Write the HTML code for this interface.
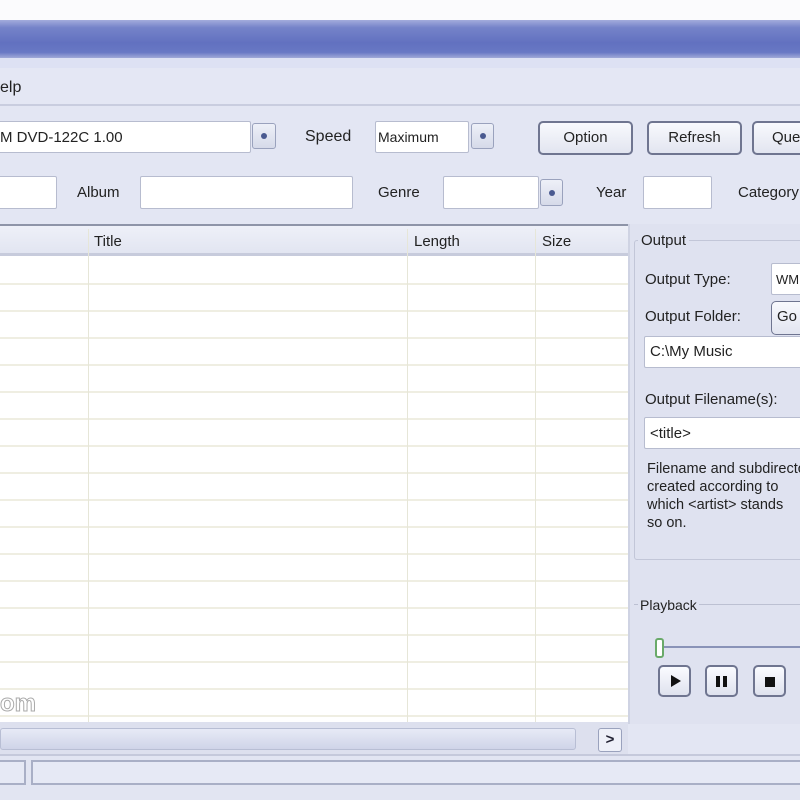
<!DOCTYPE html>
<html><head><style>
body{margin:0;width:800px;height:800px;overflow:hidden;background:#e3e6f3;font-family:"Liberation Sans","DejaVu Sans",sans-serif;font-size:15px;color:#222;position:relative}
div,span{position:absolute;box-sizing:border-box}
.in{background:#fff;border:1px solid #b7bccf;border-radius:2px}
.dd{background:linear-gradient(#eef0f8,#d6dae9);border:1px solid #9aa2bd;border-radius:3px}
.dd::after{content:"";position:absolute;left:50%;top:50%;width:6px;height:6px;margin:-3px;background:#4a5a90;border-radius:50%}
.btn{background:linear-gradient(#f8f9fd,#e2e5f0);border:2px solid #6f7590;border-radius:5px;text-align:center;line-height:30px;font-size:15px}
.pb{background:linear-gradient(#fafbff,#dfe2ee);border:2px solid #6f7590;border-radius:5px}
</style></head><body>
<div style="left:0;top:0;width:800px;height:20px;background:#fbfbfd"></div>
<div style="left:0;top:20px;width:800px;height:38px;background:linear-gradient(#a3acdc 0%,#7583c9 20%,#6271c0 60%,#6878c4 85%,#a0a9d8 100%)"></div>
<div style="left:0;top:58px;width:800px;height:10px;background:#dde1f3"></div>
<div style="left:0;top:68px;width:800px;height:38px;background:#e4e7f4;border-bottom:2px solid #c9cddf"></div>
<span style="left:0;top:79px;font-size:16px">elp</span>

<div class="in" style="left:-5px;top:121px;width:256px;height:32px"></div>
<span style="left:0;top:129px">M DVD-122C 1.00</span>
<div class="dd" style="left:252px;top:123px;width:24px;height:26px"></div>
<span style="left:305px;top:128px;font-size:16px">Speed</span>
<div class="in" style="left:375px;top:121px;width:94px;height:32px"></div>
<span style="left:378px;top:129px;font-size:14px">Maximum</span>
<div class="dd" style="left:471px;top:123px;width:23px;height:26px"></div>
<div class="btn" style="left:538px;top:121px;width:95px;height:34px">Option</div>
<div class="btn" style="left:647px;top:121px;width:95px;height:34px">Refresh</div>
<div class="btn" style="left:752px;top:121px;width:70px;height:34px;text-align:left;padding-left:18px">Query</div>

<div class="in" style="left:-5px;top:176px;width:62px;height:33px"></div>
<span style="left:77px;top:184px">Album</span>
<div class="in" style="left:140px;top:176px;width:213px;height:33px"></div>
<span style="left:378px;top:184px">Genre</span>
<div class="in" style="left:443px;top:176px;width:96px;height:33px"></div>
<div class="dd" style="left:540px;top:179px;width:23px;height:27px"></div>
<span style="left:596px;top:184px">Year</span>
<div class="in" style="left:643px;top:176px;width:69px;height:33px"></div>
<span style="left:738px;top:184px">Category</span>

<div style="left:0;top:224px;width:628px;height:500px;background:#fff;border-top:2px solid #8e94a8"></div>
<div style="left:0;top:226px;width:628px;height:30px;background:linear-gradient(#eef0f8,#e2e5f1);border-bottom:3px solid #c7cbdc"></div>
<span style="left:94px;top:233px;font-size:15px">Title</span>
<span style="left:414px;top:233px;font-size:15px">Length</span>
<span style="left:542px;top:233px;font-size:15px">Size</span>
<div style="left:0;top:258px;width:628px;height:464px;background:repeating-linear-gradient(#fff 0,#fff 25px,#efeee2 25px,#efeee2 27px)"></div>
<div style="left:88px;top:229px;width:1px;height:493px;background:#e6e6d8"></div>
<div style="left:407px;top:229px;width:1px;height:493px;background:#e6e6d8"></div>
<div style="left:535px;top:229px;width:1px;height:493px;background:#e6e6d8"></div>
<span style="left:0;top:690px;font-size:24px;font-weight:bold;color:#fff;-webkit-text-stroke:1px #aaa">om</span>

<div style="left:0;top:722px;width:628px;height:32px;background:#dde0ee"></div>
<div style="left:0;top:728px;width:576px;height:22px;background:linear-gradient(#e7eaf6,#cfd4e8);border:1px solid #b8bed4;border-radius:3px"></div>
<div style="left:598px;top:728px;width:24px;height:24px;background:#eef0f8;border:1px solid #9aa2bd;border-radius:3px;text-align:center;font-weight:bold;line-height:22px;color:#223">&gt;</div>

<div style="left:628px;top:224px;width:172px;height:500px;background:#dfe2f0;border-left:2px solid #cfd3e3"></div>
<div style="left:634px;top:240px;width:180px;height:320px;border:1px solid #c2c6d8;border-radius:3px"></div>
<span style="left:638px;top:232px;background:#dfe2f0;padding:0 3px;font-size:15px">Output</span>
<span style="left:645px;top:271px">Output Type:</span>
<div class="in" style="left:771px;top:263px;width:40px;height:32px"></div>
<span style="left:776px;top:272px;font-size:13px">WM</span>
<span style="left:645px;top:308px">Output Folder:</span>
<div class="btn" style="left:771px;top:301px;width:50px;height:34px;border-width:1px;text-align:left;padding-left:5px">Go</div>
<div class="in" style="left:644px;top:336px;width:170px;height:32px"></div>
<span style="left:650px;top:343px">C:\My Music</span>
<span style="left:645px;top:391px">Output Filename(s):</span>
<div class="in" style="left:644px;top:417px;width:170px;height:32px"></div>
<span style="left:650px;top:425px">&lt;title&gt;</span>
<span style="left:647px;top:460px;line-height:18px;font-size:14.5px;white-space:nowrap">Filename and subdirectory<br>created according to<br>which &lt;artist&gt; stands<br>so on.</span>

<div style="left:634px;top:604px;width:180px;height:120px;border-top:1px solid #bcc0d2"></div>
<span style="left:638px;top:597px;background:#dfe2f0;padding:0 2px;font-size:14px">Playback</span>
<div style="left:660px;top:646px;width:150px;height:2px;background:#8a93b8"></div>
<div style="left:655px;top:638px;width:9px;height:20px;background:#fff;border:2px solid #6aaa6a;border-radius:3px"></div>
<div class="pb" style="left:658px;top:665px;width:33px;height:32px"><span style="left:11px;top:8px;width:0;height:0;border-left:10px solid #111;border-top:6px solid transparent;border-bottom:6px solid transparent"></span></div>
<div class="pb" style="left:705px;top:665px;width:33px;height:32px"><span style="left:9px;top:9px;width:4px;height:11px;background:#111"></span><span style="left:16px;top:9px;width:4px;height:11px;background:#111"></span></div>
<div class="pb" style="left:753px;top:665px;width:33px;height:32px"><span style="left:10px;top:10px;width:10px;height:10px;background:#111"></span></div>
<div class="pb" style="left:800px;top:665px;width:33px;height:32px"></div>

<div style="left:0;top:754px;width:800px;height:46px;background:#e2e5f2;border-top:2px solid #c5c9db"></div>
<div style="left:-2px;top:760px;width:28px;height:25px;border:2px solid #a9afc6;background:#e6e9f5"></div>
<div style="left:31px;top:760px;width:780px;height:25px;border:2px solid #a9afc6;background:#e6e9f5"></div>
</body></html>
